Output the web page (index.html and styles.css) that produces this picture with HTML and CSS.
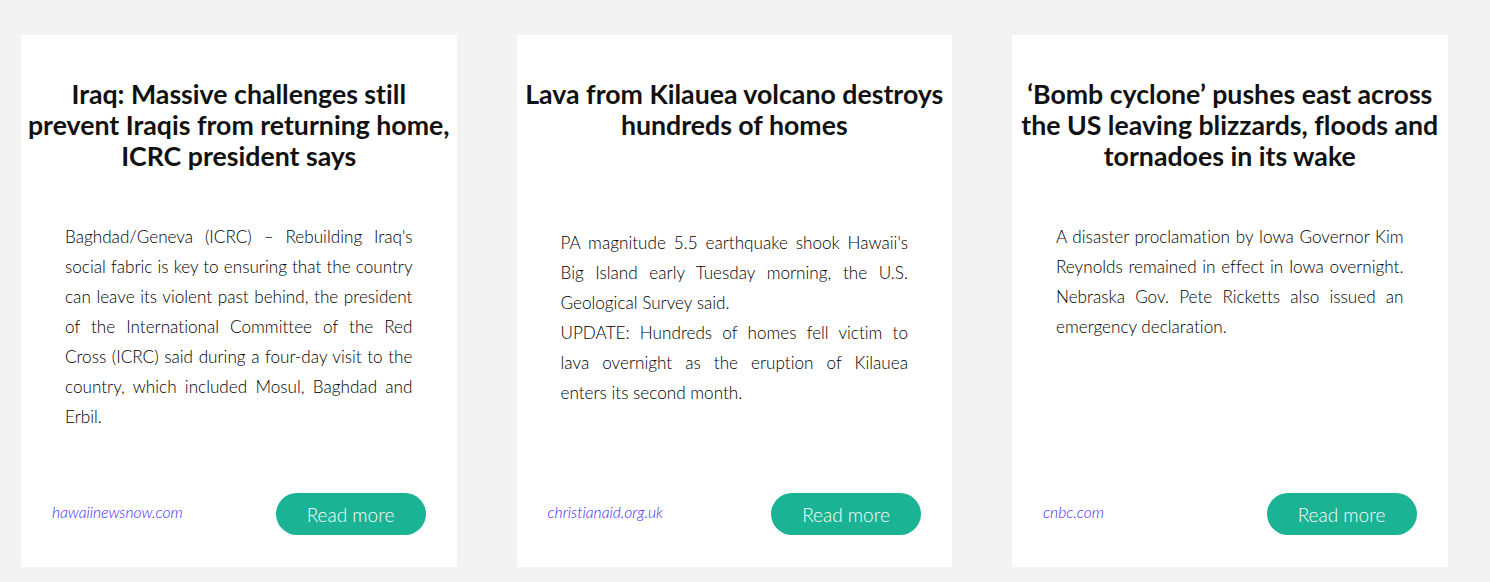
FILE: index.html
```html
<!DOCTYPE html>
<html lang="en">
<head>
<meta charset="utf-8">
<title>News</title>
<link rel="stylesheet" href="styles.css">
</head>
<body>
<main class="cards">
  <article class="card">
    <h2 class="card-title">Iraq: Massive challenges still prevent Iraqis from returning home, ICRC president says</h2>
    <div class="card-body">
      <p>Baghdad/Geneva (ICRC) – Rebuilding Iraq's social fabric is key to ensuring that the country can leave its violent past behind, the president of the International Committee of the Red Cross (ICRC) said during a four-day visit to the country, which included Mosul, Baghdad and Erbil.</p>
    </div>
    <div class="card-footer">
      <a class="source" href="#">hawaiinewsnow.com</a>
      <a class="btn" href="#">Read more</a>
    </div>
  </article>
  <article class="card">
    <h2 class="card-title">Lava from Kilauea volcano destroys hundreds of homes</h2>
    <div class="card-body card-body--shift">
      <p>PA magnitude 5.5 earthquake shook Hawaii's Big Island early Tuesday morning, the U.S. Geological Survey said.</p>
      <p>UPDATE: Hundreds of homes fell victim to lava overnight as the eruption of Kilauea enters its second month.</p>
    </div>
    <div class="card-footer">
      <a class="source" href="#">christianaid.org.uk</a>
      <a class="btn" href="#">Read more</a>
    </div>
  </article>
  <article class="card">
    <h2 class="card-title">‘Bomb cyclone’ pushes east across the US leaving blizzards, floods and tornadoes in its wake</h2>
    <div class="card-body">
      <p>A disaster proclamation by Iowa Governor Kim Reynolds remained in effect in Iowa overnight. Nebraska Gov. Pete Ricketts also issued an emergency declaration.</p>
    </div>
    <div class="card-footer">
      <a class="source" href="#">cnbc.com</a>
      <a class="btn" href="#">Read more</a>
    </div>
  </article>
</main>
</body>
</html>
```

FILE: styles.css
```css
html, body {
  margin: 0;
  padding: 0;
}
body {
  background: #f3f3f4;
  font-family: Lato, "Liberation Sans", sans-serif;
  font-variant-ligatures: no-common-ligatures;
  color: #000;
  width: 1490px;
  height: 582px;
  overflow: hidden;
}
.cards {
  display: flex;
  gap: 60px;
  padding: 35px 0 0 21px;
}
.card {
  width: 435.5px;
  height: 532px;
  background: #fff;
  display: flex;
  flex-direction: column;
  box-sizing: border-box;
  padding-top: 44px;
}
.card-title {
  margin: 0;
  padding: 0 4px;
  height: 93px;
  font-size: 26.7px;
  line-height: 31px;
  font-weight: 700;
  color: #111;
  text-align: center;
}
.card-body {
  margin-top: 50px;
  padding: 0 44px;
  font-weight: 300;
  font-size: 17.15px;
  line-height: 30px;
  color: #000;
  text-align: justify;
}
.card-body--shift {
  margin-top: 56px;
}
.card-body p {
  margin: 0;
}
.card-footer {
  margin-top: auto;
  padding: 0 31px 32px 31px;
  display: flex;
  align-items: center;
  justify-content: space-between;
}
.source {
  font-style: italic;
  font-weight: 300;
  font-size: 15.6px;
  color: #3a28ff;
  text-decoration: none;
  margin-top: -4px;
}
.btn {
  width: 150px;
  height: 42px;
  border-radius: 21px;
  background: #1ab394;
  color: #fff;
  font-weight: 300;
  font-size: 19px;
  line-height: 44px;
  text-align: center;
  text-decoration: none;
}
```
